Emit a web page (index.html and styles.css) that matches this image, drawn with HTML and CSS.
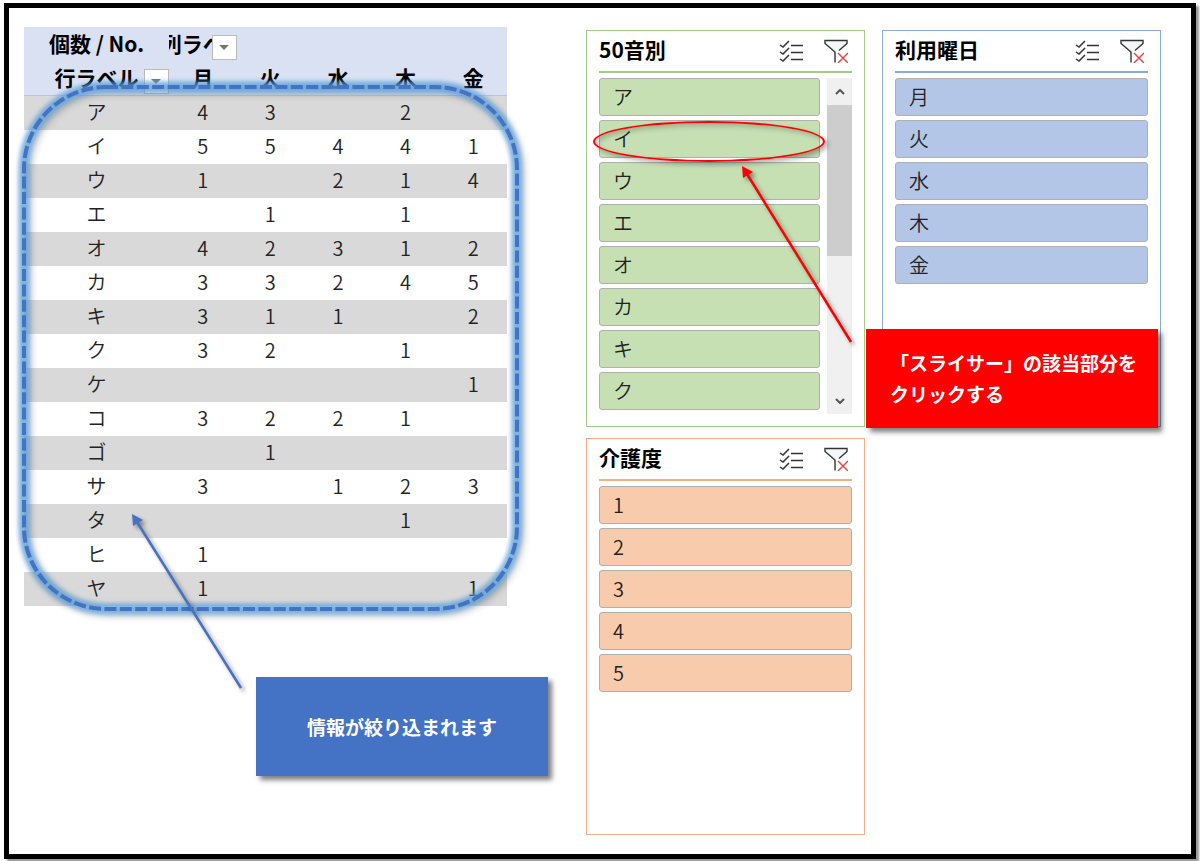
FILE: index.html
```html
<!DOCTYPE html>
<html lang="ja">
<head>
    <meta charset="UTF-8">
    <meta name="viewport" content="width=device-width, initial-scale=1.0">
    <title>利用者一覧</title>
    <link rel="stylesheet" href="styles.css">
</head>
<body>
    <svg class="defs" aria-hidden="true">
        <symbol id="multi" viewBox="0 0 24 24">
            <path d="M1 6l3 2 6-6M1 13l3 2 6-6M1 20l3 2 6-6" fill="none" stroke="#333" stroke-width="1.5"/>
            <path d="M12 6.5h12M12 13.5h12M12 20.5h12" stroke="#333" stroke-width="1.4"/>
        </symbol>
        <symbol id="clear" viewBox="0 0 24 24">
            <path d="M11 23.5V13L1 4.500V1.500h22v3l-8 7" fill="#f2f8f8" stroke="#333" stroke-width="1.4"/>
            <path d="M14 14l10 10M24 14L14 24" stroke="#e04a4a" stroke-width="1.5"/>
        </symbol>
    </svg>

    <main class="frame">
        <section class="pivot">
            <div class="table-wrap">
                <table>
                    <colgroup>
                        <col class="col-label">
                        <col span="5">
                    </colgroup>
                    <thead>
                        <tr>
                            <th>個数 / No.</th>
                            <th><div class="clip">列ラベル</div><button class="drop" aria-label="列ラベル"></button></th>
                            <th colspan="4"></th>
                        </tr>
                        <tr>
                            <th>行ラベル<button class="drop" aria-label="行ラベル"></button></th>
                            <th>月</th><th>火</th><th>水</th><th>木</th><th>金</th>
                        </tr>
                    </thead>
                    <tbody>
                        <tr><td>ア</td><td>4</td><td>3</td><td></td><td>2</td><td></td></tr>
                        <tr><td>イ</td><td>5</td><td>5</td><td>4</td><td>4</td><td>1</td></tr>
                        <tr><td>ウ</td><td>1</td><td></td><td>2</td><td>1</td><td>4</td></tr>
                        <tr><td>エ</td><td></td><td>1</td><td></td><td>1</td><td></td></tr>
                        <tr><td>オ</td><td>4</td><td>2</td><td>3</td><td>1</td><td>2</td></tr>
                        <tr><td>カ</td><td>3</td><td>3</td><td>2</td><td>4</td><td>5</td></tr>
                        <tr><td>キ</td><td>3</td><td>1</td><td>1</td><td></td><td>2</td></tr>
                        <tr><td>ク</td><td>3</td><td>2</td><td></td><td>1</td><td></td></tr>
                        <tr><td>ケ</td><td></td><td></td><td></td><td></td><td>1</td></tr>
                        <tr><td>コ</td><td>3</td><td>2</td><td>2</td><td>1</td><td></td></tr>
                        <tr><td>ゴ</td><td></td><td>1</td><td></td><td></td><td></td></tr>
                        <tr><td>サ</td><td>3</td><td></td><td>1</td><td>2</td><td>3</td></tr>
                        <tr><td>タ</td><td></td><td></td><td></td><td>1</td><td></td></tr>
                        <tr><td>ヒ</td><td>1</td><td></td><td></td><td></td><td></td></tr>
                        <tr><td>ヤ</td><td>1</td><td></td><td></td><td></td><td>1</td></tr>
                    </tbody>
                </table>
                <div class="marker">
                    <svg width="100%" height="100%">
                        <rect class="marker-shadow" width="100%" height="100%" rx="82"/>
                        <rect class="marker-glow" width="100%" height="100%" rx="82"/>
                        <rect class="marker-line" width="100%" height="100%" rx="82"/>
                    </svg>
                </div>
            </div>
            <svg class="arrow arrow-blue" viewBox="0 0 109 174">
                <path d="M109 174L5 8" stroke="#4472c4" stroke-width="2.5"/>
                <path d="M0 0l11 6-10 6z" fill="#4472c4"/>
            </svg>
            <p class="note note-blue">情報が絞り込まれます</p>
        </section>

        <section class="slicers">
            <div class="slicer green">
                <header>
                    <h2>50音別</h2>
                    <button class="tool" aria-label="複数選択"><svg><use href="#multi"/></svg></button>
                    <button class="tool" aria-label="フィルターのクリア"><svg><use href="#clear"/></svg></button>
                </header>
                <div class="slicer-body">
                    <div class="items">
                        <button>ア</button>
                        <button>イ</button>
                        <button>ウ</button>
                        <button>エ</button>
                        <button>オ</button>
                        <button>カ</button>
                        <button>キ</button>
                        <button>ク</button>
                    </div>
                    <div class="scroll">
                        <button aria-label="上へ"><svg viewBox="0 0 10 6"><path d="M1 5l4-4 4 4"/></svg></button>
                        <div class="thumb"></div>
                        <button aria-label="下へ"><svg viewBox="0 0 10 6"><path d="M1 1l4 4 4-4"/></svg></button>
                    </div>
                </div>
                <div class="ring"></div>
                <svg class="arrow arrow-red" viewBox="0 0 109 176">
                    <path d="M109 176L5 8" stroke="#f00" stroke-width="2.5"/>
                    <path d="M0 0l11 6-10 6z" fill="#f00"/>
                </svg>
            </div>

            <div class="slicer blue">
                <header>
                    <h2>利用曜日</h2>
                    <button class="tool" aria-label="複数選択"><svg><use href="#multi"/></svg></button>
                    <button class="tool" aria-label="フィルターのクリア"><svg><use href="#clear"/></svg></button>
                </header>
                <div class="slicer-body">
                    <div class="items">
                        <button>月</button>
                        <button>火</button>
                        <button>水</button>
                        <button>木</button>
                        <button>金</button>
                    </div>
                </div>
            </div>

            <div class="slicer orange">
                <header>
                    <h2>介護度</h2>
                    <button class="tool" aria-label="複数選択"><svg><use href="#multi"/></svg></button>
                    <button class="tool" aria-label="フィルターのクリア"><svg><use href="#clear"/></svg></button>
                </header>
                <div class="slicer-body">
                    <div class="items">
                        <button>1</button>
                        <button>2</button>
                        <button>3</button>
                        <button>4</button>
                        <button>5</button>
                    </div>
                </div>
            </div>
            <p class="note note-red">「スライサー」の該当部分を<br>クリックする</p>
        </section>
    </main>
</body>
</html>
```

FILE: styles.css
```css
* {
    box-sizing: border-box;
}
body {
    margin: 0;
    padding: 3px 4px 2px;
    min-height: 100vh;
    display: flex;
    background-color: #fff;
    color: #222;
    font-family: "Noto Sans CJK JP", sans-serif;
    font-size: 20px;
    font-weight: 350;
}
button {
    padding: 0;
    border: none;
    background: none;
    color: inherit;
    font: inherit;
    cursor: pointer;
}
.defs {
    position: absolute;
    width: 0;
    height: 0;
}
.frame {
    flex: 1;
    display: flex;
    align-items: flex-start;
    gap: 79px;
    padding: 19px 30px 19px 15px;
    border: 5px solid #000;
    box-shadow: 3px 3px 2px #999;
}

/* pivot table */
.pivot {
    position: relative;
    flex: 483;
}
.table-wrap {
    position: relative;
}
table {
    width: 100%;
    table-layout: fixed;
    border-collapse: separate;
    border-spacing: 0;
    text-align: center;
}
.col-label {
    width: 30%;
}
th, td {
    position: relative;
    height: 34px;
    padding: 0 0 3px;
    line-height: 30px;
}
th {
    background-color: #d9e1f2;
    color: #000;
    font-size: 21px;
    font-weight: 700;
}
thead tr:last-child th {
    height: 35px;
    border-bottom: 1px solid #b4c6e7;
}
tbody tr:nth-child(odd) {
    background-color: #d9d9d9;
}
.clip {
    display: flex;
    justify-content: center;
    overflow: hidden;
    white-space: nowrap;
}
.drop {
    position: absolute;
    right: 0;
    bottom: 1px;
    width: 25px;
    height: 25px;
    border: 1px solid #bbb;
    background-color: #fff;
}
.drop::after {
    content: "";
    display: block;
    width: 0;
    margin: 0 auto;
    border: 5px solid transparent;
    border-top-color: #777;
    border-bottom: none;
}

/* dashed marker round the table body */
.marker {
    position: absolute;
    top: 60px;
    right: -10px;
    bottom: -3px;
    left: 0;
    pointer-events: none;
}
.marker svg {
    display: block;
    overflow: visible;
}
.marker rect {
    fill: none;
    stroke: #4472c4;
    stroke-width: 4px;
}
.marker-line {
    stroke-dasharray: 12 3.4;
}
.marker .marker-glow {
    stroke: #5ba3e0;
    stroke-width: 11px;
    filter: blur(2px);
    opacity: 0.75;
}
.marker .marker-shadow {
    stroke: #000;
    stroke-width: 6px;
    filter: blur(4px);
    opacity: 0.3;
    transform: translate(3px, 3px);
}

/* callouts */
.arrow {
    position: absolute;
    fill: none;
    overflow: visible;
    pointer-events: none;
    filter: drop-shadow(3px 3px 2px rgba(0, 0, 0, 0.4));
}
.arrow-blue {
    left: 108px;
    top: 487px;
    width: 109px;
}
.arrow-red {
    left: 155px;
    top: 135px;
    width: 109px;
    z-index: 1;
}
.note {
    position: absolute;
    display: flex;
    align-items: center;
    width: 292px;
    height: 99px;
    margin: 0;
    color: #fff;
    font-size: 19px;
    font-weight: 700;
    line-height: 31px;
    white-space: nowrap;
    box-shadow: 4px 4px 5px rgba(0, 0, 0, 0.5);
}
.note-blue {
    top: 650px;
    left: 232px;
    justify-content: center;
    background-color: #4472c4;
}
.note-red {
    display: block;
    top: 299px;
    right: 3px;
    padding: 18px 24px;
    background-color: #f00;
}
.ring {
    position: absolute;
    top: 90px;
    left: 6px;
    width: 232px;
    height: 41px;
    border: 2px solid #f00;
    border-radius: 50%;
    box-shadow: 3px 3px 5px rgba(0, 0, 0, 0.3), inset 3px 3px 5px rgba(0, 0, 0, 0.2);
    pointer-events: none;
}

/* slicers */
.slicers {
    position: relative;
    flex: 575;
    display: grid;
    grid-template-columns: 1fr 1fr;
    grid-auto-rows: 1fr;
    gap: 11px 17px;
    margin-top: 3px;
}
.slicer {
    position: relative;
    padding: 0 12px 12px;
    border: 1px solid var(--line);
}
.green {
    --line: #a2cc85;
    --fill: #c6e0b4;
}
.blue {
    --line: #8ea9db;
    --fill: #b4c6e7;
}
.orange {
    --line: #f4b084;
    --fill: #f8cbad;
}
.slicer header {
    display: flex;
    align-items: center;
    height: 42px;
    margin-bottom: 5px;
    border-bottom: 2px solid var(--line);
}
.slicer h2 {
    flex: 1;
    margin: 0;
    padding-bottom: 4px;
    color: #000;
    font-size: 21px;
    font-weight: 700;
    line-height: 36px;
}
.tool {
    width: 24px;
    height: 24px;
    margin-left: 21px;
}
.tool:last-child {
    margin-right: 4px;
}
.tool svg {
    display: block;
    width: 24px;
    height: 24px;
}
.slicer-body {
    display: flex;
    gap: 7px;
}
.items {
    flex: 1;
    display: flex;
    flex-direction: column;
    gap: 4px;
}
.items button {
    height: 38px;
    padding: 0 13px;
    border: 1px solid #b0b0b0;
    border-radius: 3px;
    background-color: var(--fill);
    line-height: 36px;
    text-align: left;
}
.scroll {
    display: flex;
    flex-direction: column;
    width: 25px;
    height: 336px;
    background-color: #f0f0f0;
}
.scroll button {
    height: 27px;
}
.scroll button:last-child {
    margin-top: auto;
}
.scroll svg {
    display: block;
    width: 10px;
    margin: 0 auto;
    fill: none;
    stroke: #555;
    stroke-width: 2px;
}
.thumb {
    height: 151px;
    background-color: #cdcdcd;
}
```
